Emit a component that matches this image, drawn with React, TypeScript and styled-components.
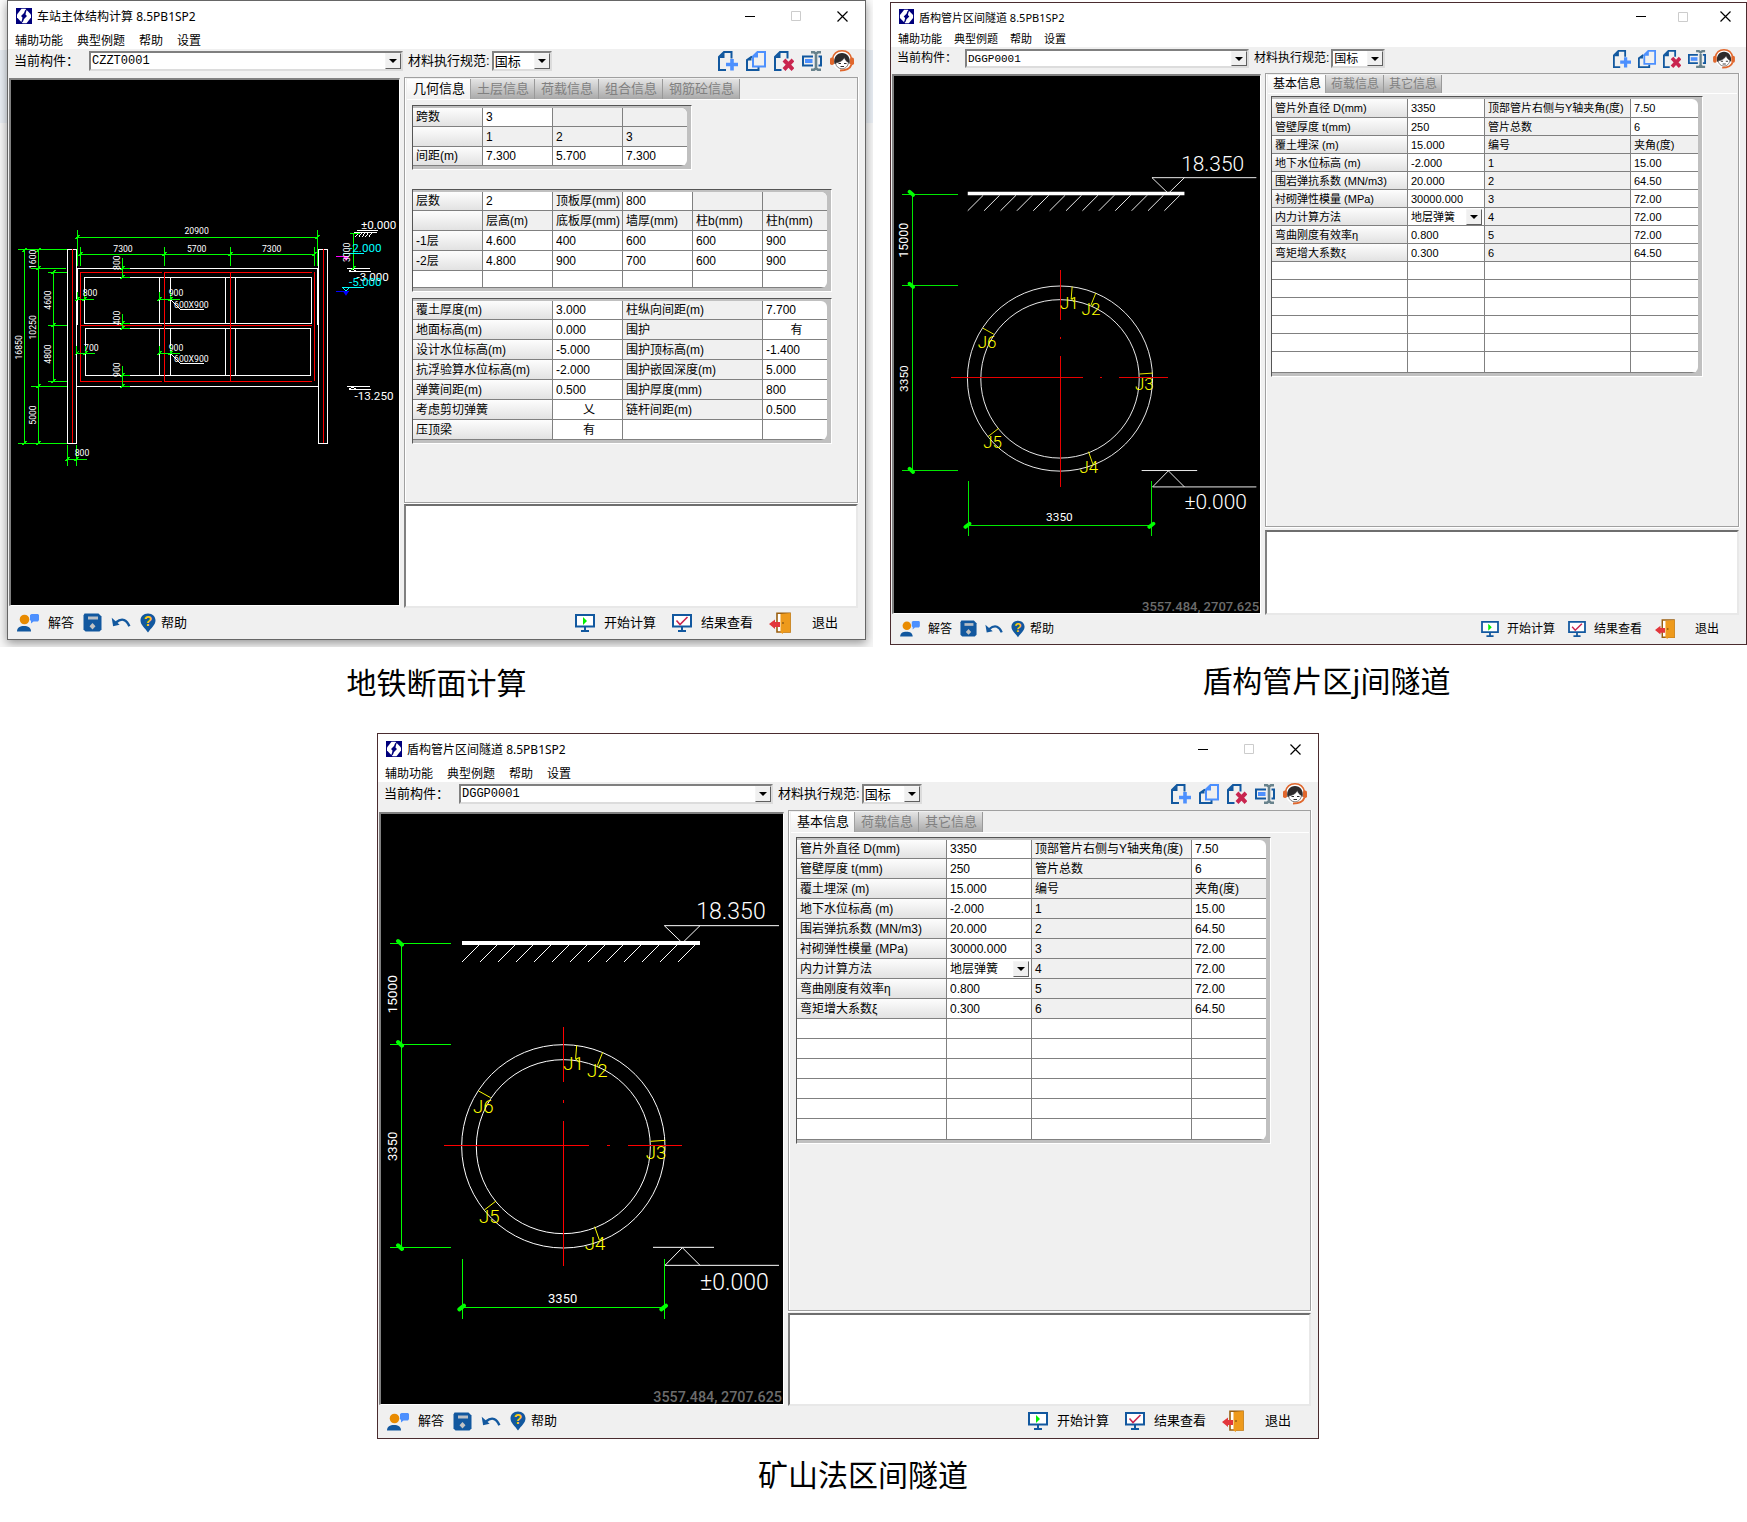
import React, { useId } from "react";
import styled, { createGlobalStyle, ThemeProvider } from "styled-components";

/* ---------- theme ---------- */

const uiFont = '"Liberation Sans", "Noto Sans CJK SC", sans-serif';
const titleFont = '"Noto Sans", "Noto Sans CJK SC", sans-serif';
const monoFont = '"Liberation Mono", "Noto Sans CJK SC", monospace';
const cadFont = "Roboto, sans-serif";

const large = {
  frame: "#666",
  title: 12,
  titleHeight: 30,
  menuHeight: 18,
  menuGap: 14,
  control: 46,
  toolbarHeight: 28,
  label: 13,
  labelWidth: 81,
  nameWidth: 314,
  codeWidth: 60,
  comboHeight: 20,
  code: 12,
  icon: 20,
  iconGap: 8,
  canvasWidth: 388,
  canvasTop: 1,
  tab: 13,
  tabPad: 6,
  tabHeight: 20,
  pageHeight: 426,
  pageTop: 5,
  pageLeft: 5,
  paneGap: 1,
  messageHeight: 104,
  cell: 12,
  row: 20,
  footer: 13,
  footerHeight: 31,
  footerGap: 9,
  footerWideGap: 16,
  exitGap: 21,
};

type Sizes = typeof large;

const medium: Sizes = {
  ...large,
  frame: "#4a2c2f",
  canvasWidth: 402,
  canvasTop: 2,
  pageHeight: 501,
  pageTop: 4,
  paneGap: 2,
  messageHeight: 93,
  footerHeight: 32,
};

const small: Sizes = {
  ...medium,
  title: 11,
  titleHeight: 27,
  menuHeight: 17,
  menuGap: 12,
  control: 42,
  toolbarHeight: 26,
  label: 12,
  labelWidth: 74,
  nameWidth: 284,
  codeWidth: 54,
  comboHeight: 19,
  code: 11,
  icon: 18,
  iconGap: 7,
  canvasWidth: 366,
  canvasTop: 1,
  tab: 12,
  tabPad: 5,
  tabHeight: 18,
  pageHeight: 454,
  pageTop: 2,
  pageLeft: 3,
  paneGap: 3,
  messageHeight: 85,
  cell: 11,
  row: 18,
  footer: 12,
  footerHeight: 29,
  footerGap: 8,
  footerWideGap: 13,
  exitGap: 20,
};

declare module "styled-components" {
  export interface DefaultTheme extends Sizes {}
}

const GlobalStyle = createGlobalStyle`
  *, *::before, *::after { box-sizing: border-box; }
  body { margin: 0; background: #fff; color: #000; font-family: ${uiFont}; }
  button, input, select, textarea { font: inherit; color: inherit; margin: 0; }
`;

/* ---------- page ---------- */

const Page = styled.main`
  display: flex;
  flex-direction: column;
  gap: 30px;
`;
const TopRow = styled.div`
  display: grid;
  grid-template-columns: 873fr 857fr;
  gap: 17px;
  align-items: start;
`;
const BottomRow = styled.div`
  display: grid;
  grid-template-columns: 377fr 942fr 428fr;
`;
const Figure = styled.figure<{ $column?: number }>`
  margin: 0;
  min-width: 0;
  grid-column: ${(p) => p.$column ?? "auto"};
`;
const SpacedFigure = styled(Figure)`
  padding-top: 2px;
`;
const Caption = styled.figcaption<{ $indent: number }>`
  padding: 12px 0 0 ${(p) => p.$indent}px;
  text-align: center;
  font: 400 30px/44px "Noto Sans CJK SC", sans-serif;
`;
const Backdrop = styled.div`
  overflow: hidden;
  padding: 0 7px 7px;
  background: linear-gradient(#fbfbfb 50px, #e9eef4 50px, #e9eef4 123px, #f6f6f6 123px);
`;

/* ---------- window chrome ---------- */

const Window = styled.section<{ $shadow?: boolean }>`
  border: 1px solid ${(p) => p.theme.frame};
  background: #f0f0f0;
  box-shadow: ${(p) => (p.$shadow ? "0 3px 9px rgba(0, 0, 0, 0.4)" : "none")};
`;
const TitleBar = styled.header`
  display: flex;
  align-items: center;
  height: ${(p) => p.theme.titleHeight}px;
  padding-left: 8px;
  background: #fff;
  font: ${(p) => p.theme.title}px ${titleFont};
`;
const Title = styled.h1`
  flex: 1;
  margin: 0;
  padding-left: 5px;
  font: inherit;
`;
const ControlButton = styled.button<{ $muted?: boolean }>`
  display: grid;
  place-items: center;
  width: ${(p) => p.theme.control}px;
  height: 100%;
  padding: 0;
  border: 0;
  background: none;
  color: ${(p) => (p.$muted ? "#ccc" : "#000")};
`;
const MenuBar = styled.nav`
  display: flex;
  align-items: flex-end;
  gap: ${(p) => p.theme.menuGap}px;
  height: ${(p) => p.theme.menuHeight}px;
  padding-left: 7px;
  background: #fff;
`;
const MenuButton = styled.button`
  padding: 0;
  border: 0;
  background: none;
  font: ${(p) => p.theme.title}px/17px ${titleFont};
`;

/* ---------- toolbar ---------- */

const Toolbar = styled.div`
  display: flex;
  align-items: flex-start;
  height: ${(p) => p.theme.toolbarHeight}px;
  padding: 2px 11px 0 6px;
  font-size: ${(p) => p.theme.label}px;
  line-height: ${(p) => p.theme.comboHeight}px;
`;
const NameLabel = styled.label`
  flex: none;
  width: ${(p) => p.theme.labelWidth - 6}px;
`;
const CodeLabel = styled.label`
  flex: none;
  padding: 0 2px 0 5px;
`;
const ComboBox = styled.span<{ $width: number; $size: number; $mono?: boolean }>`
  position: relative;
  flex: none;
  width: ${(p) => p.$width}px;
  height: ${(p) => p.theme.comboHeight}px;
  border: 2px solid;
  border-color: #808080 #dcdcdc #dcdcdc #808080;
  background: #fff;
  font: ${(p) => p.$size}px ${(p) => (p.$mono ? monoFont : uiFont)};
`;
const Select = styled.select`
  display: block;
  width: 100%;
  height: 100%;
  padding: 0 18px 0 1px;
  border: 0;
  background: none;
  appearance: none;
`;
const DropArrow = styled.span`
  position: absolute;
  inset: 0 0 0 auto;
  display: grid;
  place-items: center;
  width: 16px;
  border: 1px solid;
  border-color: #f4f4f4 #606060 #606060 #f4f4f4;
  background: #f0f0f0;
  pointer-events: none;
  &::after {
    content: "";
    border: 4px solid transparent;
    border-top-color: #000;
    border-bottom-width: 0;
  }
`;
const ToolButtons = styled.div`
  display: flex;
  align-items: center;
  gap: ${(p) => p.theme.iconGap}px;
  height: ${(p) => p.theme.comboHeight}px;
  margin-left: auto;
`;
const IconButton = styled.button`
  display: flex;
  padding: 0;
  border: 0;
  background: none;
`;

/* ---------- body ---------- */

const Body = styled.div`
  display: grid;
  grid-template-columns: auto minmax(0, 1fr);
  gap: 4px;
  padding: 0 7px 0 1px;
`;
const Canvas = styled.div`
  align-self: start;
  margin-top: ${(p) => p.theme.canvasTop}px;
  border: solid;
  border-width: 2px 1px 1px 2px;
  border-color: #808080 #fff #fff #808080;
  background: #000;
  svg {
    display: block;
    width: ${(p) => p.theme.canvasWidth}px;
  }
`;
const Side = styled.div`
  display: flex;
  flex-direction: column;
  gap: ${(p) => p.theme.paneGap}px;
`;
const TabPage = styled.div`
  min-height: ${(p) => p.theme.pageHeight}px;
  border: 1px solid #a0a0a0;
  box-shadow: inset 1px 0 #fff, 0 1px #fff, 1px 0 #fff;
  padding: 1px 1px 0 2px;
`;
const TabList = styled.div`
  display: flex;
  border-bottom: 1px solid #fff;
`;
const Tab = styled.button<{ $active: boolean }>`
  height: ${(p) => p.theme.tabHeight}px;
  padding: 0 ${(p) => p.theme.tabPad - 1}px 0 ${(p) => p.theme.tabPad}px;
  border: 0;
  border-right: 1px solid ${(p) => (p.$active ? "#a0a0a0" : "#999")};
  background: ${(p) => (p.$active ? "linear-gradient(#fff, #f0f0f0)" : "linear-gradient(#e4e4e4, #a9a9a9)")};
  color: ${(p) => (p.$active ? "#000" : "#808080")};
  font-size: ${(p) => p.theme.tab}px;
  line-height: 18px;
`;
const Grids = styled.div`
  display: flex;
  flex-direction: column;
  align-items: flex-start;
  padding: ${(p) => p.theme.pageTop}px 0 0 ${(p) => p.theme.pageLeft}px;
`;
const GridFrame = styled.div<{ $before: number }>`
  margin-top: ${(p) => p.$before}px;
  padding: 2px 4px 3px 0;
  border: 1px solid;
  border-color: #555 #fff #fff #555;
  background: #c0c0c0;
`;
const GridTable = styled.table<{ $first: number; $last: number }>`
  table-layout: fixed;
  border-spacing: 0;
  overflow: hidden;
  border-radius: 0 6px 6px 0;
  background: #fff;
  font-size: ${(p) => p.theme.cell}px;
  tr {
    height: ${(p) => p.theme.row}px;
  }
  tr:first-child {
    height: ${(p) => p.$first}px;
  }
  tr:last-child {
    height: ${(p) => p.$last}px;
  }
  th,
  td {
    height: inherit;
    padding: 0;
    border: solid #808080;
    border-width: 0 1px 1px 0;
    font-weight: 400;
    text-align: left;
    white-space: nowrap;
    line-height: 16px;
  }
  tr > :last-child {
    border-right: 0;
  }
`;
const RowHead = styled.th`
  background: linear-gradient(#fdfdfd, #e2e2e2);
  && {
    padding-left: 3px;
  }
`;
const GreyCell = styled.td`
  background: #f0f0f0;
  && {
    padding-left: 3px;
  }
`;
const CellInput = styled.input<{ $center?: boolean }>`
  display: block;
  width: 100%;
  height: 16px;
  padding: 0 0 0 3px;
  border: 0;
  outline: 0;
  background: none;
  text-align: ${(p) => (p.$center ? "center" : "left")};
`;
const CellCombo = styled.div`
  position: relative;
  height: 16px;
  margin-right: 2px;
  padding-left: 2px;
`;
const Messages = styled.textarea`
  display: block;
  width: 100%;
  height: ${(p) => p.theme.messageHeight}px;
  border: 2px solid;
  border-color: #6e6e6e #e8e8e8 #e8e8e8 #808080;
  background: #fff;
  resize: none;
`;

/* ---------- footer ---------- */

const Footer = styled.footer`
  display: flex;
  justify-content: space-between;
  height: ${(p) => p.theme.footerHeight}px;
  padding: 0 27px 2px 9px;
  font-size: ${(p) => p.theme.footer}px;
`;
const FooterGroup = styled.div<{ $wide?: boolean }>`
  display: flex;
  align-items: center;
  gap: ${(p) => (p.$wide ? p.theme.footerWideGap : p.theme.footerGap)}px;
`;
const FooterButton = styled.button<{ $tight?: boolean; $exit?: boolean }>`
  display: flex;
  align-items: center;
  gap: ${(p) => (p.$exit ? p.theme.exitGap : p.$tight ? 5 : p.theme.footerGap)}px;
  padding: 0;
  border: 0;
  background: none;
  line-height: 20px;
`;

/* ---------- icons ---------- */

const BLUE = "#12589f";
const SKY = "#4d90fe";

interface IconProps {
  size: number;
}

const Logo = ({ size }: IconProps) => (
  <svg width={size} height={size} viewBox="0 0 16 16" aria-hidden="true">
    <rect width="16" height="16" fill="#00007c" />
    <path d="M5.500.8h4L15 6.500v3l-4.500 5.700h-4L1 9.500v-3z" fill="#fff" />
    <path d="M11.500 0 9 2.500 8 5 5 8l1.500 1.500L6 12l-1.500 4L7 13.500 8 11l3-3-1.500-1.500L10 4z" fill="#00007c" />
  </svg>
);
const NewIcon = ({ size }: IconProps) => (
  <svg width={size} height={size} viewBox="0 0 20 20" aria-hidden="true">
    <path d="M8 19H1V6l5-5h7.500v6.500" fill="none" stroke={BLUE} strokeWidth="2" />
    <path d="M1 7h5.500V1z" fill={BLUE} />
    <path d="M14 8v11.500M8 13.500h12" stroke={SKY} strokeWidth="3.600" />
  </svg>
);
const CopyIcon = ({ size }: IconProps) => (
  <svg width={size} height={size} viewBox="0 0 20 20" aria-hidden="true">
    <path d="M6 5.500 1 9v10h11.500v-3" fill="none" stroke={BLUE} strokeWidth="2" />
    <path d="M1 9.500h4.500V5z" fill={BLUE} />
    <path d="M7 15.500V5.500L11.500 1H19v14.500z" fill="#f0f0f0" stroke={SKY} strokeWidth="2" />
    <path d="M6.500 6.500H12V1z" fill={SKY} />
  </svg>
);
const DeleteIcon = ({ size }: IconProps) => (
  <svg width={size} height={size} viewBox="0 0 20 20" aria-hidden="true">
    <path d="M7.500 19H1V6l5-5h7.500v6.500" fill="none" stroke={BLUE} strokeWidth="2" />
    <path d="M1 7h5.500V1z" fill={BLUE} />
    <path d="m10 9 9 9.500M19 9l-9 9.500" stroke="#c9254f" strokeWidth="4" />
  </svg>
);
const RenameIcon = ({ size }: IconProps) => (
  <svg width={size} height={size} viewBox="0 0 20 20" aria-hidden="true">
    <path d="M11 5.500H1v9h10M16.500 5.500H19v9h-2.500" fill="none" stroke={BLUE} strokeWidth="2" />
    <path d="M3 8h7.500v4H3z" fill={SKY} />
    <path
      d="M9 1.200h3l2 1.500 2-1.500h3M9 18.800h3l2-1.500 2 1.500h3M14 2v16"
      fill="none"
      stroke="#68828c"
      strokeWidth="2.600"
    />
  </svg>
);
const SupportIcon = ({ size }: IconProps) => (
  <svg width={size} height={size - 2} viewBox="0 0 24 22" aria-hidden="true">
    <circle cx="12" cy="11" r="9.500" fill="#fff" />
    <path d="M2.500 9C3.500 3.500 7.500.8 12 .8S20.500 3.500 21.500 9" fill="none" stroke="#e0672d" strokeWidth="1.600" />
    <path d="M4.500 14C3 7.500 7 3 12 3s9 4.500 7.500 11L17 12 7 14z" fill="#2e2b2c" />
    <path d="M5.500 13c4-.5 7.500-2.500 9-5.500.5 2.500 2 4 4 5-.5 3.800-3.200 6.300-6.500 6.300S6 16.500 5.500 13z" fill="#fff" stroke="#2e2b2c" strokeWidth=".6" />
    <path d="M8.500 13.500H11m3 0h2.500M10.500 16.500H14" stroke="#2e2b2c" />
    <rect y="7.500" width="4" height="7.500" rx="1.800" fill="#e0672d" />
    <rect x="20" y="7.500" width="4" height="7.500" rx="1.800" fill="#e0672d" />
    <path d="M21.500 14.500c-1.500 4.500-5 6-11.500 6" fill="none" stroke="#e0672d" strokeWidth="2" />
  </svg>
);

/* Footer icons are drawn for a scale of 1; the narrow window uses a slightly smaller one. */
interface ScaleProps {
  scale: number;
}
const AnswerIcon = ({ scale }: ScaleProps) => (
  <svg width={Math.round(22 * scale)} height={Math.round(19 * scale)} viewBox="0 0 22 19" aria-hidden="true">
    <circle cx="7.500" cy="6.500" r="4.800" fill="#e98b00" />
    <path d="M0 18.500c0-4 3-5.500 7-5.500s7 1.500 7 5.500z" fill={BLUE} />
    <path d="M14.500 1H21l1 1v5l-1 1.500h-4.500L14 10.500V8l-1-1V2z" fill={SKY} />
  </svg>
);
const SaveIcon = ({ scale }: ScaleProps) => (
  <svg width={Math.round(19 * scale)} height={Math.round(19 * scale)} viewBox="0 0 19 19" aria-hidden="true">
    <path d="M1.500.5h14l3 3v13l-2 2h-14l-2-2v-14z" fill={BLUE} />
    <path d="M5 3.500h10v3H5z" fill="#b9bfc6" />
    <path d="m9.500 10 3 3.300-3 3.200-3-3.200z" fill="#c3c3c3" />
  </svg>
);
const UndoIcon = ({ scale }: ScaleProps) => (
  <svg width={Math.round(20 * scale)} height={Math.round(13 * scale)} viewBox="0 0 21 14" aria-hidden="true">
    <path d="M5 7c7-6 12-2.500 14.500 4" fill="none" stroke={BLUE} strokeWidth="2.600" />
    <path d="M.5 2 2 11l7-1.500z" fill={BLUE} />
  </svg>
);
const HelpIcon = ({ scale }: ScaleProps) => (
  <svg width={Math.round(16 * scale)} height={Math.round(20 * scale)} viewBox="0 0 16 20" aria-hidden="true">
    <path d="M8 .5C3.500.5.5 3.700.5 7.500.5 12 5 15 8 19.500c3-4.500 7.500-7.500 7.500-12C15.500 3.700 12.500.5 8 .5z" fill={BLUE} />
    <text x="8" y="13" textAnchor="middle" fontSize="14" fontWeight="700" fontFamily="Liberation Sans" fill="#ffc814">
      ?
    </text>
  </svg>
);
const MonitorIcon = ({ scale, check }: ScaleProps & { check?: boolean }) => (
  <svg width={Math.round(20 * scale)} height={Math.round(18 * scale)} viewBox="0 0 20 18" aria-hidden="true">
    <path d="M1 1h18v11.500H1z" fill="#fff" stroke={BLUE} strokeWidth="2" />
    <path d="M10 13v3.500M6 17h8" stroke={BLUE} strokeWidth="2" />
    {check ? (
      <path d="m4.500 6.500 3.500 4L15.500 3" fill="none" stroke="#c9254f" strokeWidth="1.600" />
    ) : (
      <path d="M8 3v8l4-4z" fill="#00f000" />
    )}
  </svg>
);
const DoorIcon = ({ scale }: ScaleProps) => (
  <svg width={Math.round(22 * scale)} height={Math.round(22 * scale)} viewBox="0 0 22 22" aria-hidden="true">
    <path d="M8 20V1.200h13V20z" fill="#fff" stroke="#9a5f10" strokeWidth="1.600" />
    <path d="M11.500 2 21.500 1v19.500H14V22l-2.500-1.500z" fill="#ee9a1c" />
    <circle cx="14" cy="11" r="1" fill="#9a5f10" />
    <path d="m0 12 6-4.500V10h5v5H6v2z" fill="#e2363b" />
  </svg>
);

/* ---------- drawings ---------- */

type Seg = [number, number, number, number];
const toPath = (segs: Seg[]) => segs.map(([a, b, c, d]) => `M${a} ${b}L${c} ${d}`).join("");

interface MarkProps {
  x: number;
  y: number;
  size?: number;
  fill?: string;
  weight?: number;
  turn?: boolean;
  children: string;
}
/* A dimension text: centred on x, standing on y; turned ones are centred on their own line. */
const Mark = ({ x, y, size = 26, fill = "#fff", weight = 400, turn, children }: MarkProps) => (
  <text
    x={x}
    y={y}
    fontSize={size}
    fontWeight={weight}
    fill={fill}
    textAnchor="middle"
    transform={turn ? `rotate(-90 ${x} ${y})` : undefined}
  >
    {children}
  </text>
);

const stationGreen: Seg[] = [
  [232, 112, 952, 112], [232, 90, 232, 198], [952, 90, 952, 198],
  [241, 163, 943, 163], [241, 140, 241, 198], [493, 140, 493, 198], [691, 140, 691, 198], [943, 140, 943, 198],
  [73, 148, 73, 730], [115, 148, 115, 730], [160, 217, 160, 544],
  [54, 148, 202, 148], [93, 205, 198, 205], [144, 217, 202, 217], [144, 376, 202, 376],
  [144, 544, 202, 544], [93, 559, 202, 559], [54, 730, 202, 730],
  [202, 736, 202, 797], [229, 736, 229, 797], [202, 778, 262, 778],
  [367, 174, 367, 232], [367, 205, 390, 205], [367, 232, 390, 232],
  [367, 342, 367, 385], [367, 370, 390, 370], [367, 385, 390, 385],
  [367, 497, 367, 559], [367, 526, 390, 526], [367, 559, 390, 559],
  [230, 298, 282, 298], [232, 277, 232, 300], [253, 277, 253, 300],
  [230, 460, 285, 460], [230, 437, 230, 460], [256, 437, 256, 460],
  [478, 298, 540, 298], [478, 277, 478, 298], [511, 277, 511, 298],
  [478, 460, 540, 460], [478, 437, 478, 460], [511, 437, 511, 460],
  [1060, 99, 1060, 205], [1050, 99, 1080, 99],
];
const stationTicks: [number, number][] = [
  [232, 112], [952, 112], [241, 163], [493, 163], [691, 163], [943, 163],
  [73, 150], [115, 150], [115, 205], [160, 217], [160, 376], [160, 544], [115, 559], [73, 730], [115, 730],
  [202, 778], [229, 778], [367, 205], [367, 232], [367, 370], [367, 385], [367, 526], [367, 559],
  [232, 298], [253, 298], [230, 460], [256, 460], [478, 298], [511, 298], [478, 460], [511, 460], [1060, 205],
];
const stationWhite: Seg[] = [
  [232, 205, 953, 205], [232, 205, 232, 376], [953, 205, 953, 376], [230, 559, 955, 559],
  [253, 232, 935, 232], [253, 370, 935, 370], [256, 385, 932, 385], [256, 526, 932, 526],
  [253, 232, 253, 370], [935, 232, 935, 370], [256, 385, 256, 526], [932, 385, 932, 526],
  [478, 232, 478, 370], [511, 232, 511, 370], [676, 232, 676, 370], [706, 232, 706, 370],
  [478, 385, 478, 526], [511, 385, 511, 526], [676, 385, 676, 526], [706, 385, 706, 526],
  [511, 298, 541, 328], [541, 328, 612, 328], [511, 460, 541, 490], [541, 490, 612, 490],
  [1070, 91, 1135, 91], [1062, 98, 1132, 98], [1041, 205, 1110, 205], [1047, 214, 1112, 214],
  [1041, 559, 1110, 559], [1047, 568, 1112, 568], [1047, 214, 1059, 207], [1059, 207, 1068, 214],
  [1047, 568, 1059, 561], [1059, 561, 1068, 568],
];
const stationRed: Seg[] = [
  [217, 148, 217, 730], [970, 148, 970, 730],
  [241, 217, 486, 217], [493, 217, 936, 217], [241, 376, 486, 376], [493, 376, 936, 376],
  [241, 544, 486, 544], [493, 544, 936, 544],
  [241, 217, 241, 544], [493, 217, 493, 544], [691, 217, 691, 544], [943, 217, 943, 544],
];

const StationDrawing = () => (
  <svg viewBox="33 -360 1164 1575" role="img" aria-label="车站主体结构断面图" fontFamily={cadFont}>
    <g fill="none" strokeWidth="3" shapeRendering="crispEdges">
      <path d={toPath(stationWhite)} stroke="#fff" />
      <path d="M202 148h28v582h-28zM955 148h28v582h-28z" stroke="#fff" />
      <path d="m1066 112 8-12m2 12 8-12m2 12 8-12m2 12 8-12m2 12 8-12" stroke="#fff" />
      <path d={toPath(stationRed)} stroke="#f00" />
      <path d={toPath(stationGreen)} stroke="#0f0" />
      <path d={stationTicks.map(([x, y]) => `M${x - 6} ${y + 6}l12-12`).join("")} stroke="#0f0" />
      <path d="M1028 160h64M1026 262h66M1030 264l8 10 8-10" stroke="#0ff" />
      <path d="M1008 169h39" stroke="#f0f" />
      <path d="M1008 274h39" stroke="#00f" />
    </g>
    <path d="M1028 169h19l-9 14z" fill="#f0f" />
    <path d="M1028 273h19l-9 14z" fill="#00f" />
    <Mark x={590} y={102}>20900</Mark>
    <Mark x={369} y={156}>7300</Mark>
    <Mark x={590} y={156}>5700</Mark>
    <Mark x={815} y={156}>7300</Mark>
    <Mark x={108} y={178} turn>1600</Mark>
    <Mark x={153} y={300} turn>4600</Mark>
    <Mark x={153} y={462} turn>4800</Mark>
    <Mark x={108} y={382} turn>10250</Mark>
    <Mark x={66} y={442} turn>16850</Mark>
    <Mark x={108} y={645} turn>5000</Mark>
    <Mark x={360} y={188} turn>800</Mark>
    <Mark x={360} y={354} turn>400</Mark>
    <Mark x={360} y={509} turn>900</Mark>
    <Mark x={270} y={288}>800</Mark>
    <Mark x={528} y={288}>900</Mark>
    <Mark x={574} y={324}>600X900</Mark>
    <Mark x={274} y={453}>700</Mark>
    <Mark x={528} y={453}>900</Mark>
    <Mark x={574} y={486}>600X900</Mark>
    <Mark x={246} y={768}>800</Mark>
    <Mark x={1050} y={157} turn>3000</Mark>
    <Mark x={1136} y={87} size={35}>±0.000</Mark>
    <Mark x={1096} y={157} size={35} fill="#0ff">-2.000</Mark>
    <Mark x={1118} y={244} size={35}>-3.000</Mark>
    <Mark x={1096} y={259} size={35} fill="#0ff">-5.000</Mark>
    <Mark x={1122} y={600} size={35}>-13.250</Mark>
  </svg>
);

const hatches = Array.from({ length: 13 }, (_, i) => `M${276 + 54 * i} 711l51-51`).join("");

const joints: [string, number, number][] = [
  ["J1", 611, 1036],
  ["J2", 682, 1055],
  ["J3", 858, 1301],
  ["J4", 675, 1575],
  ["J5", 358, 1493],
  ["J6", 340, 1163],
];

const TunnelDrawing = () => (
  <svg viewBox="33 267 1206 1770" role="img" aria-label="盾构管片断面图" fontFamily={cadFont}>
    <g fill="none" strokeWidth="3" stroke="#fff">
      <path d="M276 654h714" strokeWidth="12" />
      <path d={hatches} />
      <path d="M883 602h344M883 602l54 52 53-52M849 1567h183M885 1621h342M885 1621l52-53 53 53" />
      <circle cx="580" cy="1264" r="305" />
      <circle cx="580" cy="1265" r="261" />
    </g>
    <g fill="none" strokeWidth="3" shapeRendering="crispEdges">
      <path d="M580 906v165M580 1126v8M580 1188v434M222 1261h435M711 1261h8M774 1261h162" stroke="#f00" />
      <path
        d="M60 656h183M60 958h183M60 1567h183M95 656v911M277 1602v180M883 1602v180M277 1748h606"
        stroke="#0f0"
      />
    </g>
    <path
      d="M84 648l12 11M84 951l12 11M84 1561l12 11M268 1753l14-11M874 1753l14-11"
      stroke="#0f0"
      strokeWidth="12"
      strokeLinecap="round"
    />
    <path
      d="M620 961l-3 39 10 12M698 982l-16 40M326 1098l36 20M842 1249l44-3M343 1455l35-27M674 1505l14 40"
      fill="none"
      stroke="#ff0"
      strokeWidth="3"
    />
    {joints.map(([name, x, y]) => (
      <Mark key={name} x={x} y={y} size={56} weight={300} fill="#ff0">{name}</Mark>
    ))}
    <Mark x={1083} y={581} size={69} weight={300}>18.350</Mark>
    <Mark x={1093} y={1695} size={69} weight={300}>±0.000</Mark>
    <Mark x={80} y={808} size={41} turn>15000</Mark>
    <Mark x={80} y={1264} size={39} turn>3350</Mark>
    <Mark x={578} y={1734} size={39}>3350</Mark>
    <text x="1236" y="2030" textAnchor="end" fontWeight="500" fontSize="43" fill="#6c6c6c">
      3557.484, 2707.625
    </text>
  </svg>
);

/* ---------- data grids ---------- */

type Cell = { kind: "head" | "grey" | "value" | "toggle" | "choice"; text: string };
const head = (text: string): Cell => ({ kind: "head", text });
const grey = (text: string): Cell => ({ kind: "grey", text });
const val = (text: string): Cell => ({ kind: "value", text });
const toggle = (text: string): Cell => ({ kind: "toggle", text });
const choice = (text: string): Cell => ({ kind: "choice", text });

interface GridSpec {
  name: string;
  columns: number[];
  first: number;
  last: number;
  before: number;
  rows: Cell[][];
}

const DataGrid = ({ grid }: { grid: GridSpec }) => (
  <GridFrame $before={grid.before}>
    <GridTable $first={grid.first} $last={grid.last} aria-label={grid.name}>
      <colgroup>
        {grid.columns.map((width, i) => (
          <col key={i} width={width} />
        ))}
      </colgroup>
      <tbody>
        {grid.rows.map((row, r) => (
          <tr key={r}>
            {row.map((cell, c) => {
              const name = `${grid.name} ${r + 1}-${c + 1}`;
              if (cell.kind === "head") return <RowHead key={c} scope="row">{cell.text}</RowHead>;
              if (cell.kind === "grey") return <GreyCell key={c}>{cell.text}</GreyCell>;
              if (cell.kind === "choice")
                return (
                  <td key={c}>
                    <CellCombo>
                      <Select aria-label={name} defaultValue={cell.text}>
                        <option>{cell.text}</option>
                      </Select>
                      <DropArrow />
                    </CellCombo>
                  </td>
                );
              return (
                <td key={c}>
                  <CellInput aria-label={name} defaultValue={cell.text} $center={cell.kind === "toggle"} />
                </td>
              );
            })}
          </tr>
        ))}
      </tbody>
    </GridTable>
  </GridFrame>
);

const stationGrids: GridSpec[] = [
  {
    name: "跨数",
    columns: [70, 70, 70, 64],
    first: 19,
    last: 19,
    before: 0,
    rows: [
      [head("跨数"), val("3"), grey(""), grey("")],
      [head(""), grey("1"), grey("2"), grey("3")],
      [head("间距(m)"), val("7.300"), val("5.700"), val("7.300")],
    ],
  },
  {
    name: "层数",
    columns: [70, 70, 70, 70, 70, 64],
    first: 19,
    last: 17,
    before: 19,
    rows: [
      [head("层数"), val("2"), grey("顶板厚(mm)"), val("800"), grey(""), grey("")],
      [head(""), grey("层高(m)"), grey("底板厚(mm)"), grey("墙厚(mm)"), grey("柱b(mm)"), grey("柱h(mm)")],
      [head("-1层"), val("4.600"), val("400"), val("600"), val("600"), val("900")],
      [head("-2层"), val("4.800"), val("900"), val("700"), val("600"), val("900")],
      [val(""), val(""), val(""), val(""), val(""), val("")],
    ],
  },
  {
    name: "总体信息",
    columns: [140, 70, 140, 64],
    first: 19,
    last: 20,
    before: 6,
    rows: [
      [head("覆土厚度(m)"), val("3.000"), grey("柱纵向间距(m)"), val("7.700")],
      [head("地面标高(m)"), val("0.000"), grey("围护"), toggle("有")],
      [head("设计水位标高(m)"), val("-5.000"), grey("围护顶标高(m)"), val("-1.400")],
      [head("抗浮验算水位标高(m)"), val("-2.000"), grey("围护嵌固深度(m)"), val("5.000")],
      [head("弹簧间距(m)"), val("0.500"), grey("围护厚度(mm)"), val("800")],
      [head("考虑剪切弹簧"), toggle("乂"), grey("链杆间距(m)"), val("0.500")],
      [head("压顶梁"), toggle("有"), val(""), val("")],
    ],
  },
];

const blankRow = () => [val(""), val(""), val(""), val("")];
const tunnelRows: Cell[][] = [
  [head("管片外直径 D(mm)"), val("3350"), grey("顶部管片右侧与Y轴夹角(度)"), val("7.50")],
  [head("管壁厚度 t(mm)"), val("250"), grey("管片总数"), val("6")],
  [head("覆土埋深 (m)"), val("15.000"), grey("编号"), grey("夹角(度)")],
  [head("地下水位标高 (m)"), val("-2.000"), grey("1"), val("15.00")],
  [head("围岩弹抗系数 (MN/m3)"), val("20.000"), grey("2"), val("64.50")],
  [head("衬砌弹性模量 (MPa)"), val("30000.000"), grey("3"), val("72.00")],
  [head("内力计算方法"), choice("地层弹簧"), grey("4"), val("72.00")],
  [head("弯曲刚度有效率η"), val("0.800"), grey("5"), val("72.00")],
  [head("弯矩增大系数ξ"), val("0.300"), grey("6"), val("64.50")],
  ...Array.from({ length: 6 }, blankRow),
];
const tunnelGrids: GridSpec[] = [
  { name: "基本信息", columns: [150, 85, 160, 74], first: 19, last: 21, before: 0, rows: tunnelRows },
];
const narrowTunnelGrids: GridSpec[] = [
  { name: "基本信息", columns: [136, 77, 146, 67], first: 19, last: 21, before: 0, rows: tunnelRows },
];

/* ---------- program window ---------- */

interface ProgramProps {
  sizes: Sizes;
  title: string;
  component: string;
  tabs: string[];
  grids: GridSpec[];
  shadow?: boolean;
  iconScale?: number;
  children: React.ReactNode;
}

const ProgramWindow = ({ sizes, title, component, tabs, grids, shadow, iconScale = 1, children }: ProgramProps) => {
  const id = useId();
  return (
    <ThemeProvider theme={sizes}>
      <Window $shadow={shadow} aria-label={title}>
        <TitleBar>
          <Logo size={sizes.title + 4} />
          <Title>{title} 8.5PB1SP2</Title>
          <ControlButton aria-label="最小化">
            <svg width="11" height="11"><path d="M0 5.500h10" stroke="currentColor" /></svg>
          </ControlButton>
          <ControlButton aria-label="最大化" $muted>
            <svg width="10" height="10"><path d="M.5.5h9v9h-9z" fill="none" stroke="currentColor" /></svg>
          </ControlButton>
          <ControlButton aria-label="关闭">
            <svg width="11" height="11"><path d="m.5.5 10 10m0-10-10 10" stroke="currentColor" strokeWidth="1.200" /></svg>
          </ControlButton>
        </TitleBar>
        <MenuBar>
          {["辅助功能", "典型例题", "帮助", "设置"].map((item) => (
            <MenuButton key={item}>{item}</MenuButton>
          ))}
        </MenuBar>
        <Toolbar>
          <NameLabel htmlFor={`${id}-name`}>当前构件：</NameLabel>
          <ComboBox $width={sizes.nameWidth} $size={sizes.code} $mono>
            <Select id={`${id}-name`} defaultValue={component}>
              <option>{component}</option>
            </Select>
            <DropArrow />
          </ComboBox>
          <CodeLabel htmlFor={`${id}-code`}>材料执行规范:</CodeLabel>
          <ComboBox $width={sizes.codeWidth} $size={sizes.label}>
            <Select id={`${id}-code`} defaultValue="国标">
              <option>国标</option>
            </Select>
            <DropArrow />
          </ComboBox>
          <ToolButtons>
            <IconButton aria-label="新建"><NewIcon size={sizes.icon} /></IconButton>
            <IconButton aria-label="复制"><CopyIcon size={sizes.icon} /></IconButton>
            <IconButton aria-label="删除"><DeleteIcon size={sizes.icon} /></IconButton>
            <IconButton aria-label="重命名"><RenameIcon size={sizes.icon} /></IconButton>
            <IconButton aria-label="客服"><SupportIcon size={sizes.icon + 4} /></IconButton>
          </ToolButtons>
        </Toolbar>
        <Body>
          <Canvas>{children}</Canvas>
          <Side>
            <TabPage>
              <TabList role="tablist">
                {tabs.map((tab, i) => (
                  <Tab key={tab} role="tab" aria-selected={i === 0} $active={i === 0}>
                    {tab}
                  </Tab>
                ))}
              </TabList>
              <Grids>
                {grids.map((grid) => (
                  <DataGrid key={grid.name} grid={grid} />
                ))}
              </Grids>
            </TabPage>
            <Messages aria-label="信息输出" readOnly />
          </Side>
        </Body>
        <Footer>
          <FooterGroup>
            <FooterButton><AnswerIcon scale={iconScale} />解答</FooterButton>
            <FooterButton aria-label="保存"><SaveIcon scale={iconScale} /></FooterButton>
            <FooterButton aria-label="撤销"><UndoIcon scale={iconScale} /></FooterButton>
            <FooterButton $tight><HelpIcon scale={iconScale} />帮助</FooterButton>
          </FooterGroup>
          <FooterGroup $wide>
            <FooterButton><MonitorIcon scale={iconScale} />开始计算</FooterButton>
            <FooterButton><MonitorIcon scale={iconScale} check />结果查看</FooterButton>
            <FooterButton $exit><DoorIcon scale={iconScale} />退出</FooterButton>
          </FooterGroup>
        </Footer>
      </Window>
    </ThemeProvider>
  );
};

const tunnelTabs = ["基本信息", "荷载信息", "其它信息"];

export default function App() {
  return (
    <>
      <GlobalStyle />
      <Page>
        <TopRow>
          <Figure>
            <Backdrop>
              <ProgramWindow
                sizes={large}
                title="车站主体结构计算"
                component="CZZT0001"
                tabs={["几何信息", "土层信息", "荷载信息", "组合信息", "钢筋砼信息"]}
                grids={stationGrids}
                shadow
              >
                <StationDrawing />
              </ProgramWindow>
            </Backdrop>
            <Caption $indent={0}>地铁断面计算</Caption>
          </Figure>
          <SpacedFigure>
            <ProgramWindow
              sizes={small}
              title="盾构管片区间隧道"
              component="DGGP0001"
              tabs={tunnelTabs}
              grids={narrowTunnelGrids}
              iconScale={0.9}
            >
              <TunnelDrawing />
            </ProgramWindow>
            <Caption $indent={16}>盾构管片区j间隧道</Caption>
          </SpacedFigure>
        </TopRow>
        <BottomRow>
          <Figure $column={2}>
            <ProgramWindow
              sizes={medium}
              title="盾构管片区间隧道"
              component="DGGP0001"
              tabs={tunnelTabs}
              grids={tunnelGrids}
            >
              <TunnelDrawing />
            </ProgramWindow>
            <Caption $indent={30}>矿山法区间隧道</Caption>
          </Figure>
        </BottomRow>
      </Page>
    </>
  );
}
